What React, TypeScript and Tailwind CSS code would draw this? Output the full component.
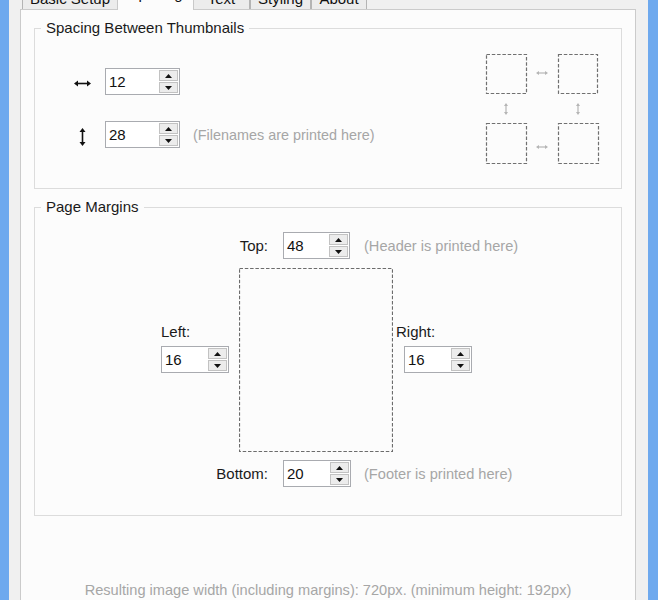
import React from "react";

const Spinner = ({ value, width }: { value: number; width: string }) => (
  <div className={`flex h-[27px] ${width} shrink-0 border border-[#a9abb0] bg-white`}>
    <span className="flex-1 pl-[3px] text-[15px] leading-[25px] text-[#111]">{value}</span>
    <div className="my-[1px] mr-[1px] flex w-[19px] flex-col gap-[1px]">
      <div className="flex flex-1 items-center justify-center border border-[#c2c2c2] bg-[#ececec]">
        <svg width="7" height="4" viewBox="0 0 7 4">
          <path d="M0 4 L3.5 0 L7 4 Z" fill="#111" />
        </svg>
      </div>
      <div className="flex flex-1 items-center justify-center border border-[#c2c2c2] bg-[#ececec]">
        <svg width="7" height="4" viewBox="0 0 7 4">
          <path d="M0 0 L3.5 4 L7 0 Z" fill="#111" />
        </svg>
      </div>
    </div>
  </div>
);

const Tab = ({ label, width, active }: { label: string; width: string; active?: boolean }) =>
  active ? (
    <div
      className={`relative z-10 -mx-[1px] -mb-[1px] h-[25px] ${width} border border-b-0 border-[#c9c9c9] bg-[#fcfcfc] text-center text-[15px] leading-[16px] text-[#111]`}
    >
      {label}
    </div>
  ) : (
    <div
      className={`h-[22px] ${width} border border-b-0 border-[#b4b4b4] bg-[#ececec] pt-[1px] text-center text-[15px] leading-[20px] text-[#111]`}
    >
      {label}
    </div>
  );

// horizontal double arrow
const HArrow = ({ color, w }: { color: string; w: number }) => (
  <svg width={w} height="7" viewBox={`0 0 ${w} 7`}>
    <path d={`M2 3.5 H${w - 2}`} stroke={color} strokeWidth="1.6" />
    <path d={`M0 3.5 L4 0.5 V6.5 Z M${w} 3.5 L${w - 4} 0.5 V6.5 Z`} fill={color} />
  </svg>
);

const VArrow = ({ color, h }: { color: string; h: number }) => (
  <svg width="7" height={h} viewBox={`0 0 7 ${h}`}>
    <path d={`M3.5 2 V${h - 2}`} stroke={color} strokeWidth="1.6" />
    <path d={`M3.5 0 L0.5 4 H6.5 Z M3.5 ${h} L0.5 ${h - 4} H6.5 Z`} fill={color} />
  </svg>
);

// 2x2 thumbnail layout preview
const ThumbDiagram = () => (
  <svg width="116" height="112" viewBox="0 0 116 112" className="shrink-0">
    <g fill="none" stroke="#707070" strokeWidth="1.2" strokeDasharray="3.5 1.8">
      <rect x="2.5" y="1.5" width="40" height="39" />
      <rect x="74.5" y="1.5" width="39" height="39" />
      <rect x="2.5" y="70.5" width="40" height="40" />
      <rect x="74.5" y="70.5" width="40" height="40" />
    </g>
    <g transform="translate(52 17)">
      <path d="M1.5 3 H10.5" stroke="#b5b5b5" strokeWidth="1.2" />
      <path d="M0 3 L3 1 V5 Z M12 3 L9 1 V5 Z" fill="#b5b5b5" />
    </g>
    <g transform="translate(52 91)">
      <path d="M1.5 3 H10.5" stroke="#b5b5b5" strokeWidth="1.2" />
      <path d="M0 3 L3 1 V5 Z M12 3 L9 1 V5 Z" fill="#b5b5b5" />
    </g>
    <g transform="translate(19 50)">
      <path d="M3 1.5 V10.5" stroke="#b5b5b5" strokeWidth="1.2" />
      <path d="M3 0 L1 3 H5 Z M3 12 L1 9 H5 Z" fill="#b5b5b5" />
    </g>
    <g transform="translate(91 50)">
      <path d="M3 1.5 V10.5" stroke="#b5b5b5" strokeWidth="1.2" />
      <path d="M3 0 L1 3 H5 Z M3 12 L1 9 H5 Z" fill="#b5b5b5" />
    </g>
  </svg>
);

const PagePreview = () => (
  <svg width="154" height="184" viewBox="0 0 154 184" className="shrink-0">
    <rect
      x="0.5"
      y="0.5"
      width="153"
      height="183"
      fill="none"
      stroke="#6c6c6c"
      strokeWidth="1.2"
      strokeDasharray="3.5 1.8"
    />
  </svg>
);

const App = () => {
  return (
    <div className="flex h-[600px] w-[658px] overflow-hidden bg-[#6ea9ee] font-['Liberation_Sans',Arial,sans-serif]">
      <div className="ml-[9px] mr-[10px] flex flex-1 flex-col bg-[#f0f0f0] pl-[11px] pr-[12px]">
        <div className="-mt-[15px] ml-[2px] flex h-[24px] items-end">
          <Tab label="Basic Setup" width="w-[96px]" />
          <Tab label="Spacing" width="w-[77px]" active />
          <Tab label="Text" width="w-[57px]" />
          <Tab label="Styling" width="w-[61px]" />
          <Tab label="About" width="w-[56px]" />
        </div>

        <div className="flex-1 border border-[#cbcbcb] bg-[#fcfcfc] px-[13px] pt-[8px] text-[15px] text-[#1a1a1a]">
          <fieldset className="h-[171px] border border-[#dcdcdc]">
            <legend className="ml-[6px] px-[5px] leading-[20px]">Spacing Between Thumbnails</legend>
            <div className="flex justify-between">
              <div className="flex flex-col gap-[26px] pl-[35px] pt-[30px]">
                <div className="flex items-center gap-[10px]">
                  <div className="flex w-[25px] justify-center pt-[3px]">
                    <HArrow color="#111" w={17} />
                  </div>
                  <Spinner value={12} width="w-[75px]" />
                </div>
                <div className="flex items-center gap-[10px]">
                  <div className="flex w-[25px] justify-center pt-[5px]">
                    <VArrow color="#111" h={18} />
                  </div>
                  <Spinner value={28} width="w-[75px]" />
                  <span className="ml-[3px] text-[14.4px] leading-[20px] text-[#a6a6a6]">
                    (Filenames are printed here)
                  </span>
                </div>
              </div>
              <div className="mr-[21px] mt-[15px]">
                <ThumbDiagram />
              </div>
            </div>
          </fieldset>

          <fieldset className="mt-[8px] h-[319px] border border-[#dcdcdc]">
            <legend className="ml-[6px] px-[5px] leading-[20px]">Page Margins</legend>
            <div className="flex flex-col">
              <div className="mt-[15px] flex items-center">
                <span className="w-[233px] text-right leading-[20px]">Top:</span>
                <div className="ml-[15px]">
                  <Spinner value={48} width="w-[67px]" />
                </div>
                <span className="ml-[14px] text-[14.6px] leading-[20px] text-[#a6a6a6]">
                  (Header is printed here)
                </span>
              </div>

              <div className="mt-[9px] flex">
                <div className="ml-[126px] mt-[54px] flex w-[68px] flex-col">
                  <span className="leading-[20px]">Left:</span>
                  <div className="mt-[4px]">
                    <Spinner value={16} width="w-[68px]" />
                  </div>
                </div>
                <div className="ml-[10px]">
                  <PagePreview />
                </div>
                <div className="ml-[3px] mt-[54px] flex flex-col">
                  <span className="leading-[20px]">Right:</span>
                  <div className="ml-[8px] mt-[4px]">
                    <Spinner value={16} width="w-[68px]" />
                  </div>
                </div>
              </div>

              <div className="mt-[8px] flex items-center">
                <span className="w-[233px] text-right leading-[20px]">Bottom:</span>
                <div className="ml-[15px]">
                  <Spinner value={20} width="w-[68px]" />
                </div>
                <span className="ml-[13px] text-[14.6px] leading-[20px] text-[#a6a6a6]">
                  (Footer is printed here)
                </span>
              </div>
            </div>
          </fieldset>

          <p className="mt-[64px] text-center text-[14.6px] leading-[20px] text-[#a6a6a6]">
            Resulting image width (including margins): 720px. (minimum height: 192px)
          </p>
        </div>
      </div>
    </div>
  );
};

export default App;
